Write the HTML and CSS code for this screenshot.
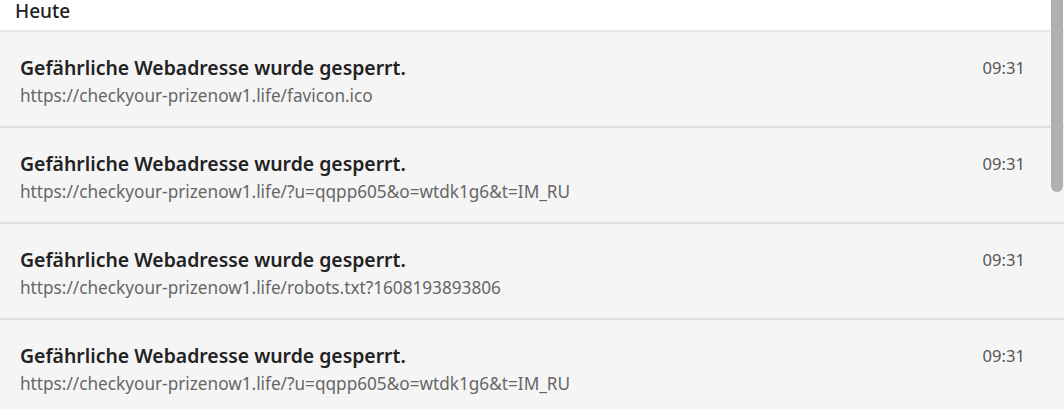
FILE: index.html
```html
<!DOCTYPE html>
<html>
  <head>
    <link rel="stylesheet" href="styles.css">
  </head>
  <body>
    <div class="page">
      <div class="day-header">Heute</div>
      <div class="list">
        <div class="item">
          <div class="item-text">
            <p class="item-title">Gefährliche Webadresse wurde gesperrt.</p>
            <p class="item-url">https://checkyour-prizenow1.life/favicon.ico</p>
          </div>
          <span class="item-time">09:31</span>
        </div>
        <div class="item">
          <div class="item-text">
            <p class="item-title">Gefährliche Webadresse wurde gesperrt.</p>
            <p class="item-url">https://checkyour-prizenow1.life/?u=qqpp605&amp;o=wtdk1g6&amp;t=IM_RU</p>
          </div>
          <span class="item-time">09:31</span>
        </div>
        <div class="item">
          <div class="item-text">
            <p class="item-title">Gefährliche Webadresse wurde gesperrt.</p>
            <p class="item-url">https://checkyour-prizenow1.life/robots.txt?1608193893806</p>
          </div>
          <span class="item-time">09:31</span>
        </div>
        <div class="item">
          <div class="item-text">
            <p class="item-title">Gefährliche Webadresse wurde gesperrt.</p>
            <p class="item-url">https://checkyour-prizenow1.life/?u=qqpp605&amp;o=wtdk1g6&amp;t=IM_RU</p>
          </div>
          <span class="item-time">09:31</span>
        </div>
      </div>
      <div class="scroll-thumb"></div>
    </div>
  </body>
</html>
```

FILE: styles.css
```css
body{
  margin: 0;
  font-family: "Noto Sans", "Open Sans", sans-serif;
  background-color: white;
  overflow: hidden;
}
.page{
  position: relative;
  height: 409px;
  overflow: hidden;
}
.day-header{
  height: 30px;
  padding-left: 15px;
  font-size: 19px;
  line-height: 23px;
  font-weight: 500;
  color: #222;
  border-bottom: 2px solid #e8e8e8;
}
.item{
  display: flex;
  align-items: flex-start;
  height: 96px;
  box-sizing: border-box;
  padding: 23px 39px 0 20px;
  background-color: #f5f5f5;
  border-bottom: 2px solid #e0e0e0;
}
.item-text{
  flex: 1;
}
.item-title{
  margin: 0;
  font-size: 19.4px;
  line-height: 26px;
  font-weight: 600;
  color: #222;
}
.item-url{
  margin: 1px 0 0 0;
  font-size: 17.2px;
  line-height: 28px;
  color: #666;
}
.item-time{
  font-size: 16.6px;
  line-height: 26px;
  color: #555;
}
.scroll-thumb{
  position: absolute;
  top: 0;
  right: 1px;
  width: 12px;
  height: 192px;
  background-color: #b0b0b0;
  border-radius: 0 0 6px 6px;
}
```
